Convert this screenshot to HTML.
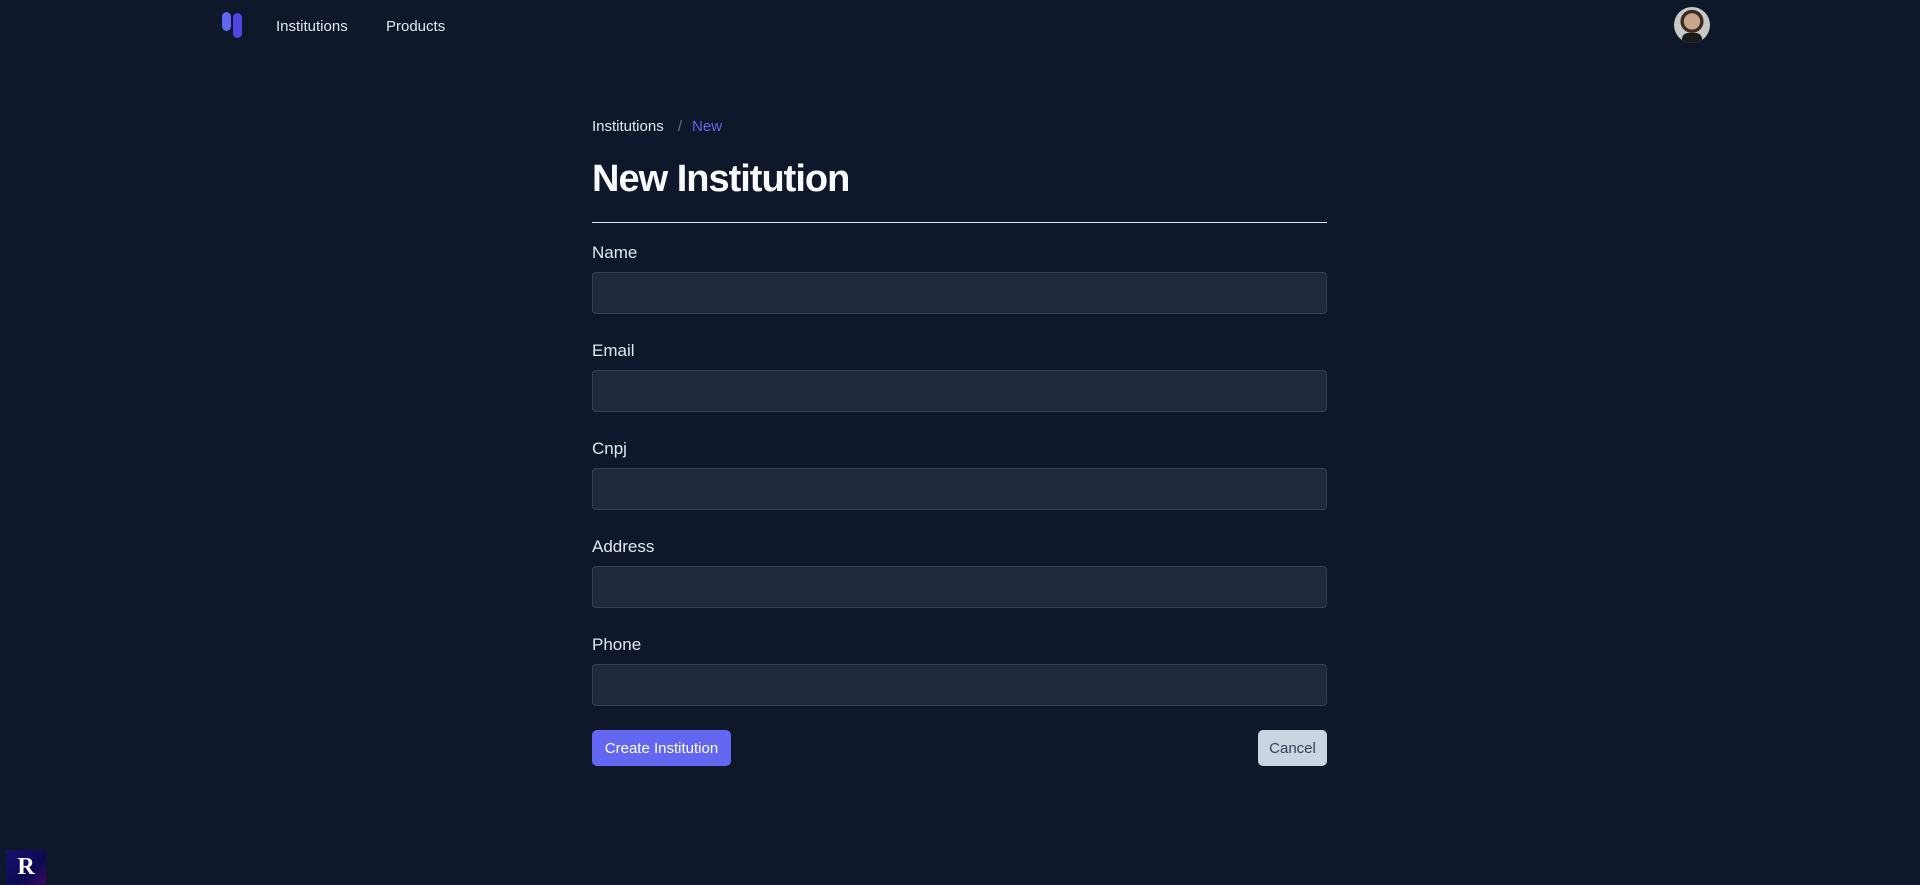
<!DOCTYPE html>
<html><head><meta charset="utf-8"><style>
*{box-sizing:border-box;margin:0;padding:0}
body{width:1920px;height:885px;background:#0f172a;font-family:"Liberation Sans",sans-serif;color:#e2e8f0;position:relative;overflow:hidden}
.a{position:absolute}
.nav{font-size:15px;color:#e2e8f0;top:18px}
.lbl{left:592px;font-size:17px;color:#e2e8f0}
.inp{left:592px;width:735px;height:42px;background:#1e293b;border:1px solid #334155;border-radius:4px}
</style></head><body>
<div class="a" style="left:222px;top:12px;width:9px;height:19px;border-radius:5px;background:#6366f1"></div>
<div class="a" style="left:233px;top:13px;width:9px;height:25px;border-radius:5px;background:#4f46e5"></div>
<div class="a nav" style="left:276px">Institutions</div>
<div class="a nav" style="left:386px">Products</div>
<div class="a" style="left:1674px;top:7px;width:36px;height:36px;border-radius:50%;background:radial-gradient(circle at 50% 40%,#c9a58c 0 28%,#3b2a22 30% 40%,#c8c8c8 42%);overflow:hidden"><div style="position:absolute;left:8px;top:26px;width:20px;height:12px;background:#1a1a1a;border-radius:6px 6px 0 0"></div></div>
<div class="a" style="left:592px;top:118px;font-size:15px">Institutions <span style="color:#64748b;margin:0 10px">/</span><span style="color:#6366f1">New</span></div>
<div class="a" style="left:592px;top:158px;font-size:38px;font-weight:bold;color:#f8fafc;letter-spacing:-1px">New Institution</div>
<div class="a" style="left:592px;top:222px;width:735px;height:1px;background:#e2e8f0"></div>
<div class="a lbl" style="top:243px">Name</div><div class="a inp" style="top:272px"></div>
<div class="a lbl" style="top:341px">Email</div><div class="a inp" style="top:370px"></div>
<div class="a lbl" style="top:439px">Cnpj</div><div class="a inp" style="top:468px"></div>
<div class="a lbl" style="top:537px">Address</div><div class="a inp" style="top:566px"></div>
<div class="a lbl" style="top:635px">Phone</div><div class="a inp" style="top:664px"></div>
<div class="a" style="left:592px;top:730px;width:139px;height:36px;background:#6366f1;border-radius:5px;color:#fff;font-size:15px;line-height:38px;text-align:center">Create Institution</div>
<div class="a" style="left:1258px;top:730px;width:69px;height:36px;background:#cbd5e1;border-radius:5px;color:#334155;font-size:15px;line-height:38px;text-align:center">Cancel</div>
<div class="a" style="left:6px;top:850px;width:40px;height:35px;background:linear-gradient(135deg,#1a1070,#0a0a50 60%,#3a0a60);color:#fff;font-family:'Liberation Serif',serif;font-weight:bold;font-size:24px;text-align:center;line-height:35px">R</div>
</body></html>
